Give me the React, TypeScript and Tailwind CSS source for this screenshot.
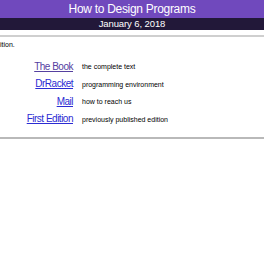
const links = [
  ['The Book', 'the complete text', 'text-[#55409f]'],
  ['DrRacket', 'programming environment', 'text-[#2b2bd3]'],
  ['Mail', 'how to reach us', 'text-[#2b2bd3]'],
  ['First Edition', 'previously published edition', 'text-[#2b2bd3]'],
]

export default function App() {
  return (
    <div className="w-[264px] h-[264px] bg-white overflow-hidden font-['Liberation_Sans',Arial,sans-serif]">
      {/* title bars */}
      <div className="h-[18px] bg-[#7049bd] text-white text-[12px] tracking-[-0.3px] leading-[18px] text-center">
        How to Design Programs
      </div>
      <div className="h-[12px] bg-[#221839] text-white text-[9.5px] tracking-[-0.1px] leading-[12px] text-center">
        January 6, 2018
      </div>
      <div className="mt-[5px] h-[2px] bg-[#cfcfcf]" />
      <p className="mt-[3px] text-[7px] leading-[10px] text-black">ition.</p>

      <div className="mt-[8px] grid grid-cols-[73px_1fr] auto-rows-[17.5px] items-center gap-x-[9px]">
        {links.map(([name, desc, color]) => (
          <div key={name} className="contents">
            <a
              href="#"
              className={`${color} text-right text-[10px] tracking-[-0.5px] leading-[12px] underline decoration-[0.5px] underline-offset-1`}
            >
              {name}
            </a>
            <span className="text-[7px] leading-[12px] text-black pt-[1px]">{desc}</span>
          </div>
        ))}
      </div>
      <div className="mt-[9px] h-[2px] bg-[#b9b9b9]" />
    </div>
  )
}
